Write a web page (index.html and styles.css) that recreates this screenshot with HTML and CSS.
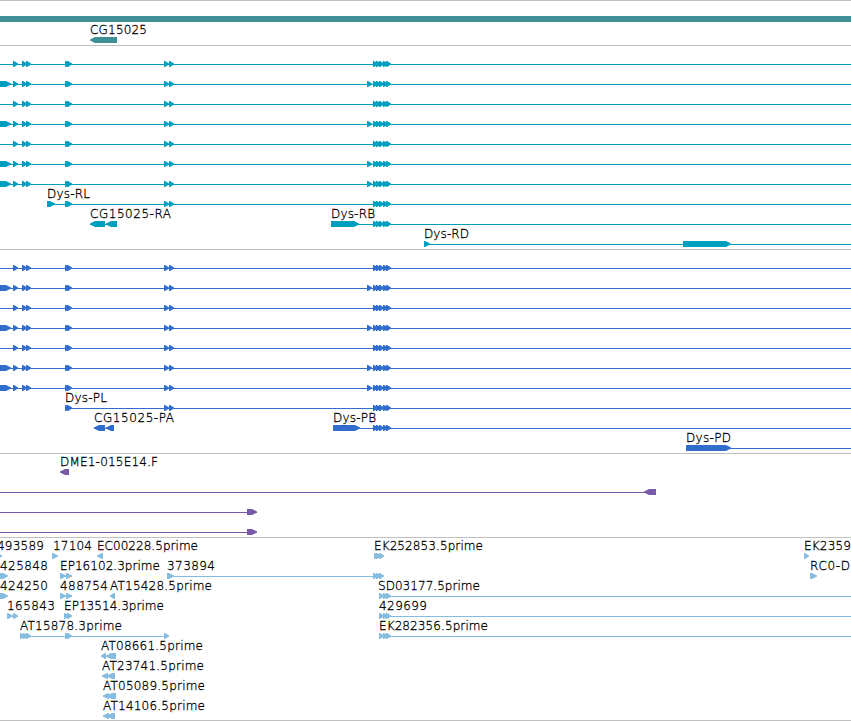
FILE: index.html
```
<!DOCTYPE html>
<html lang="en">
<head>
    <meta charset="UTF-8">
    <meta name="viewport" content="width=device-width, initial-scale=1.0">
    <title>Genome Browser</title>
    <link rel="stylesheet" href="styles.css">
</head>
<body>
    <main class="browser">
        <section class="track gene"><svg id="genes" width="851" height="44"></svg></section>
        <section class="track transcript"><svg id="transcripts" width="851" height="203"></svg></section>
        <section class="track protein"><svg id="proteins" width="851" height="203"></svg></section>
        <section class="track clone"><svg id="clones" width="851" height="83"></svg></section>
        <section class="track est"><svg id="ests" width="851" height="182"></svg></section>
    </main>
    <script src="tracks.js"></script>
</body>
</html>
```
FILE: styles.css
```
body {
    margin: 0;
    background-color: #fff;
    overflow: hidden;
}
.browser {
    display: flex;
    flex-direction: column;
    border-bottom: 1px solid #c0c0c0;
}
.track {
    border-top: 1px solid #c0c0c0;
    overflow: hidden;
}
.track svg {
    display: block;
}
.track text {
    font-family: "DejaVu Sans", sans-serif;
    font-size: 12px;
    font-weight: 200;
    fill: #000;
    stroke: #000;
    stroke-width: 0.3px;
}
.line {
    shape-rendering: crispEdges;
}
.gene {
    fill: #3f8f96;
}
.transcript {
    fill: #009fc0;
}
.protein {
    fill: #316dcd;
}
.clone {
    fill: #775aa8;
}
.est {
    fill: #86bcdf;
}
```
FILE: tracks.js
```
const ROW_HEIGHT = 20;
const FIRST_ROW = 15;
const HEAD = 5;

function draw(svg, tag, attrs, text) {
    const el = document.createElementNS("http://www.w3.org/2000/svg", tag);
    for (const key in attrs) {
        el.setAttribute(key, attrs[key]);
    }
    if (text) {
        el.textContent = text;
    }
    svg.appendChild(el);
}

// block with a pointed end, dir 1 = forward strand, -1 = reverse strand
function drawExon(svg, start, end, dir, y) {
    const tip = dir > 0 ? end : start;
    const tail = dir > 0 ? start : end;
    const neck = tip - dir * Math.min(HEAD, end - start - 1);
    draw(svg, "polygon", {
        points: `${tail},${y} ${neck},${y} ${tip},${y + 2.5} ${tip},${y + 3.5} ${neck},${y + 6} ${tail},${y + 6}`
    });
}

function drawTrack(id, rows) {
    const svg = document.getElementById(id);
    rows.forEach((row, i) => {
        row.forEach(f => {
            const y = f.y || FIRST_ROW + i * ROW_HEIGHT;
            if (f.line) {
                draw(svg, "rect", { class: "line", x: f.line[0], y: y + 3, width: f.line[1] - f.line[0], height: 1 });
            }
            (f.exons || []).forEach(e => drawExon(svg, e[0], e[1], f.dir || 1, y));
            if (f.label) {
                draw(svg, "text", { x: f.at[0], y: y - 3, textLength: f.at[1] - f.at[0] }, f.label);
            }
        });
    });
}

const cluster = [[373, 378], [376, 381], [379, 384], [383, 388], [386, 391]];
const pair = [[65, 70], [67, 72]];
const middle = [[164, 169], [169, 174]];
const left = [[13, 18], [22, 27], [26, 31]];

const plain = { line: [0, 851], exons: [...left, ...pair, ...middle, ...cluster] };
const full = { line: [0, 851], exons: [[-5, 11], ...plain.exons, [367, 372]] };
const isoforms = [[plain], [full], [plain], [full], [plain], [full], [full]];

drawTrack("genes", [
    [{ exons: [[-20, 880]] }],
    [{ y: 36, dir: -1, exons: [[90, 117]], label: "CG15025", at: [90, 147] }]
]);

drawTrack("transcripts", [
    ...isoforms,
    [{ label: "Dys-RL", at: [47, 90], line: [47, 851], exons: [[47, 55], ...pair, ...middle, ...cluster] }],
    [
        { label: "CG15025-RA", at: [90, 171], dir: -1, line: [90, 117], exons: [[90, 105], [106, 117]] },
        { label: "Dys-RB", at: [331, 375], line: [331, 851], exons: [[331, 359], ...cluster] }
    ],
    [{ label: "Dys-RD", at: [424, 469], line: [424, 851], exons: [[424, 430], [683, 731]] }]
]);

drawTrack("proteins", [
    ...isoforms,
    [{ label: "Dys-PL", at: [65, 107], line: [65, 851], exons: [...pair, ...middle, ...cluster] }],
    [
        { label: "CG15025-PA", at: [94, 174], dir: -1, line: [94, 114], exons: [[94, 105], [106, 114]] },
        { label: "Dys-PB", at: [333, 376], line: [333, 851], exons: [[333, 360], ...cluster] }
    ],
    [{ label: "Dys-PD", at: [686, 731], line: [686, 851], exons: [[686, 731]] }]
]);

drawTrack("clones", [
    [{ label: "DME1-015E14.F", at: [60, 158], dir: -1, exons: [[60, 69]] }],
    [{ dir: -1, line: [0, 656], exons: [[644, 656]] }],
    [{ line: [0, 257], exons: [[247, 257]] }],
    [{ line: [0, 257], exons: [[247, 257]] }]
]);

const tail = [[379, 384], [383, 388], [386, 391]];

drawTrack("ests", [
    [
        { label: "493589", at: [-3, 44], exons: [[-3, 2]] },
        { label: "17104", at: [53, 92], exons: [[52, 58]] },
        { label: "EC00228.5prime", at: [97, 198], dir: -1, exons: [[97, 103]] },
        { label: "EK252853.5prime", at: [374, 483], exons: [[374, 378], [376, 381], [379, 384]] },
        { label: "EK2359", at: [804, 851], exons: [[804, 809]] }
    ],
    [
        { label: "425848", at: [0, 48], exons: [[-2, 8]] },
        { label: "EP16102.3prime", at: [60, 160], exons: [[60, 66], [66, 72]], line: [60, 72] },
        { label: "373894", at: [167, 215], line: [167, 376], exons: [[167, 174], [373, 378], [376, 381], [379, 384]] },
        { label: "RC0-D", at: [810, 850], exons: [[810, 817]] }
    ],
    [
        { label: "424250", at: [0, 48], exons: [[-2, 8]] },
        { label: "488754", at: [60, 108], line: [60, 72], exons: [[60, 66], [66, 72]] },
        { label: "AT15428.5prime", at: [110, 212], dir: -1, exons: [[110, 115]] },
        { label: "SD03177.5prime", at: [378, 480], line: [379, 851], exons: tail }
    ],
    [
        { label: "165843", at: [7, 55], line: [7, 18], exons: [[7, 13], [13, 18]] },
        { label: "EP13514.3prime", at: [64, 164], exons: [[64, 69], [67, 72]] },
        { label: "429699", at: [379, 427], line: [379, 851], exons: tail }
    ],
    [
        { label: "AT15878.3prime", at: [20, 122], line: [20, 169], exons: [[20, 25], [23, 28], [26, 31], ...pair, [164, 169]] },
        { label: "EK282356.5prime", at: [379, 488], line: [379, 851], exons: tail }
    ],
    [{ label: "AT08661.5prime", at: [101, 203], dir: -1, line: [101, 116], exons: [[101, 106], [106, 116]] }],
    [{ label: "AT23741.5prime", at: [102, 204], dir: -1, line: [102, 115], exons: [[102, 108], [107, 115]] }],
    [{ label: "AT05089.5prime", at: [103, 205], dir: -1, line: [103, 116], exons: [[103, 109], [107, 116]] }],
    [{ label: "AT14106.5prime", at: [103, 205], dir: -1, line: [103, 115], exons: [[103, 109], [107, 115]] }]
]);
```
